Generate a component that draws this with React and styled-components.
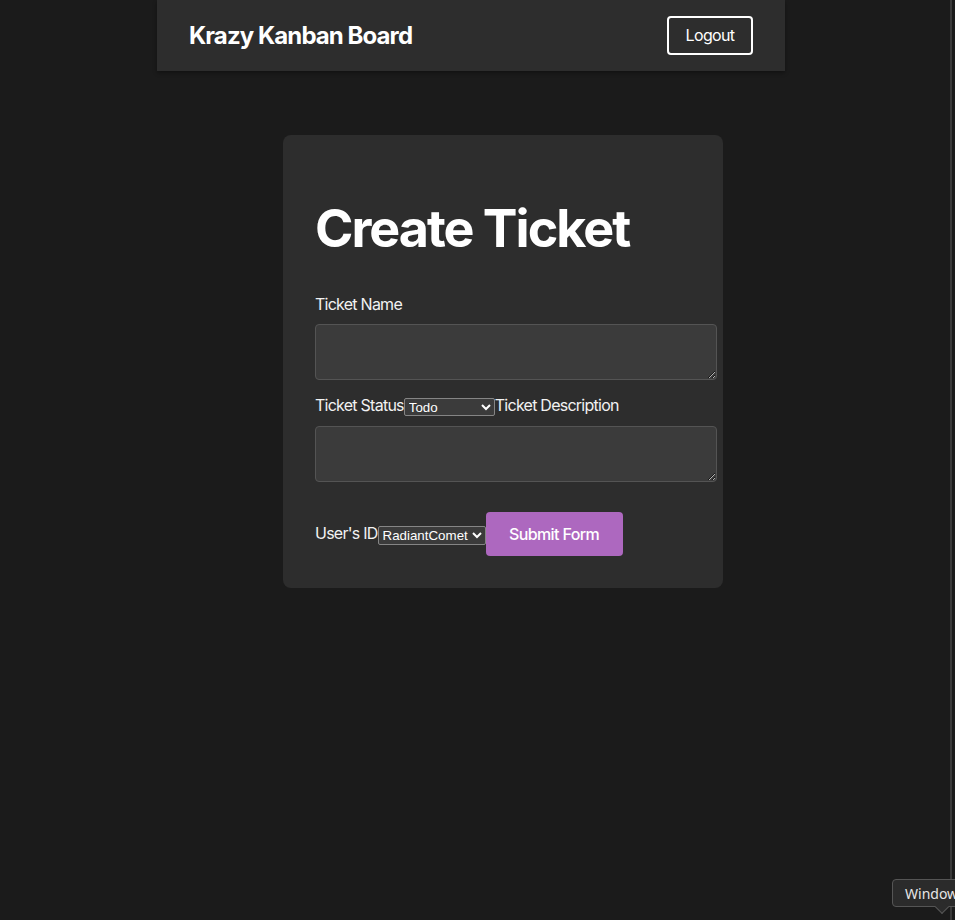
import React, { useState } from "react";
import styled, { createGlobalStyle } from "styled-components";

const GlobalStyle = createGlobalStyle`
  html, body {
    margin: 0;
    padding: 0;
    background: #1b1b1b;
    color-scheme: dark;
  }
  body {
    font-family: Inter, "Noto Sans", sans-serif;
    color: #ffffff;
    min-height: 920px;
  }
`;

const Page = styled.div`
  position: relative;
  min-height: 920px;
  padding-left: 157px;
  box-sizing: border-box;
`;

const Nav = styled.header`
  width: 628px;
  height: 71px;
  box-sizing: border-box;
  padding: 0 32px;
  display: flex;
  align-items: center;
  justify-content: space-between;
  background: #2d2d2d;
  box-shadow: 0 2px 4px rgba(0, 0, 0, 0.35);
`;

const Brand = styled.h2`
  margin: 0;
  font-size: 24px;
  font-weight: 700;
  letter-spacing: -0.92px;
`;

const OutlineButton = styled.button`
  width: 86px;
  height: 39px;
  margin-top: -1px;
  background: transparent;
  color: #ffffff;
  border: 2px solid #ffffff;
  border-radius: 4px;
  font-family: Inter, sans-serif;
  font-size: 16px;
  letter-spacing: -0.65px;
  cursor: pointer;
`;

const Card = styled.form`
  width: 440px;
  box-sizing: border-box;
  margin: 64px 0 0 126px;
  padding: 32px;
  background: #2d2d2d;
  border-radius: 8px;
  display: flex;
  flex-direction: column;
  align-items: flex-start;
`;

const Title = styled.h1`
  margin: 31px 0 34px;
  font-size: 52px;
  font-weight: 700;
  line-height: 1.21;
  letter-spacing: -2px;
`;

const Label = styled.label`
  font-size: 16px;
  line-height: 19px;
  letter-spacing: -0.75px;
  color: #f2f2f2;
`;

const TextBox = styled.textarea`
  width: 100%;
  margin-top: ${(p) => p.$top}px;
  padding: 12px;
  box-sizing: content-box;
  height: 30px;
  background: #3b3b3b;
  color: #ffffff;
  border: 1px solid #545454;
  border-radius: 4px;
  font-family: Inter, sans-serif;
  font-size: 14px;
`;

const InlineRow = styled.div`
  display: flex;
  align-items: center;
  margin-top: ${(p) => p.$top}px;
  height: ${(p) => p.$height}px;
`;

const NativeSelect = styled.select`
  height: ${(p) => p.$height}px;
  margin-top: ${(p) => p.$shift}px;
  background: #3b3b3b;
  color: #ffffff;
  border: 1px solid #858585;
  border-radius: 2px;
  font-family: "Liberation Sans", Arial, sans-serif;
  font-size: 13.33px;
`;

const SubmitButton = styled.button`
  width: 137px;
  height: 44px;
  background: #ad68bf;
  color: #ffffff;
  border: none;
  border-radius: 4px;
  font-family: Inter, sans-serif;
  font-size: 16px;
  font-weight: 500;
  letter-spacing: -0.64px;
  cursor: pointer;
`;

const EdgeLine = styled.div`
  position: absolute;
  top: 0;
  right: 3px;
  width: 2px;
  height: 100%;
  background: #3a3a3a;
`;

const Tip = styled.div`
  position: absolute;
  left: 892px;
  top: 879px;
  height: 26px;
  padding: 0 20px 0 12px;
  display: flex;
  align-items: center;
  background: #2b2b2b;
  border: 1px solid #555555;
  border-radius: 4px;
  font-family: "Noto Sans", sans-serif;
  font-size: 14px;
  color: #e6e6e6;

  &::after {
    content: "";
    position: absolute;
    left: 44px;
    bottom: -6px;
    width: 9px;
    height: 9px;
    background: #2b2b2b;
    border-right: 1px solid #555555;
    border-bottom: 1px solid #555555;
    transform: rotate(45deg);
  }
`;

export default function App() {
  const [status, setStatus] = useState("Todo");
  const [user, setUser] = useState("RadiantComet");

  return (
    <>
      <GlobalStyle />
      <Page>
        <Nav>
          <Brand>Krazy Kanban Board</Brand>
          <OutlineButton type="button">Logout</OutlineButton>
        </Nav>

        <Card onSubmit={(e) => e.preventDefault()}>
          <Title>Create Ticket</Title>
          <Label htmlFor="tName">Ticket Name</Label>
          <TextBox id="tName" $top={10} />

          <InlineRow $top={16} $height={20}>
            <Label htmlFor="tStatus">Ticket Status</Label>
            <NativeSelect
              id="tStatus"
              $height={18}
              $shift={2}
              value={status}
              onChange={(e) => setStatus(e.target.value)}
            >
              <option>Todo</option>
              <option>In Progress</option>
              <option>Done</option>
            </NativeSelect>
            <Label htmlFor="tDesc">Ticket Description</Label>
          </InlineRow>
          <TextBox id="tDesc" $top={10} />

          <InlineRow $top={30} $height={44}>
            <Label htmlFor="tUser">User's ID</Label>
            <NativeSelect
              id="tUser"
              $height={19}
              $shift={3}
              value={user}
              onChange={(e) => setUser(e.target.value)}
            >
              <option>RadiantComet</option>
            </NativeSelect>
            <SubmitButton type="submit">Submit Form</SubmitButton>
          </InlineRow>
        </Card>

        <EdgeLine />
        <Tip>Window</Tip>
      </Page>
    </>
  );
}
